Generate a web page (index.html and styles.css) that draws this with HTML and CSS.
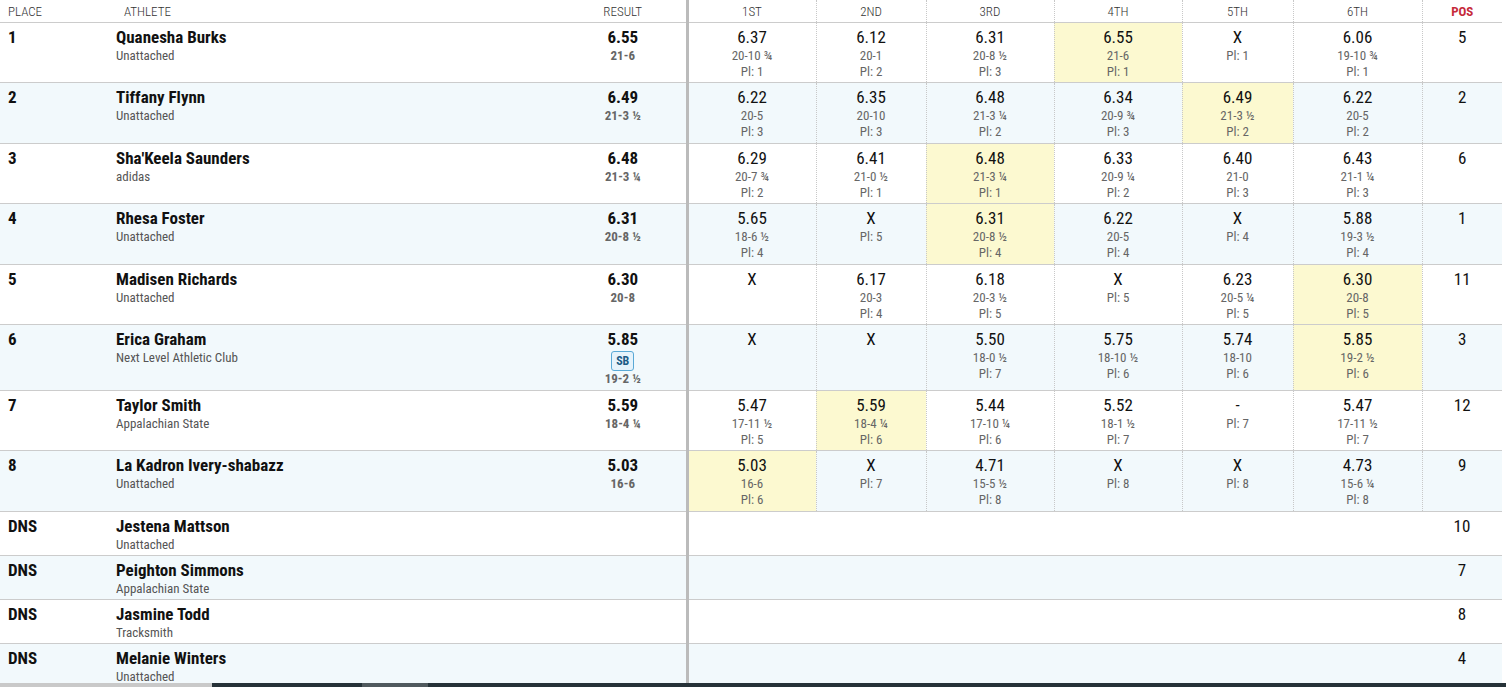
FILE: index.html
```html
<!DOCTYPE html>
<html lang="en">
<head>
  <meta charset="UTF-8">
  <meta name="viewport" content="width=device-width, initial-scale=1.0">
  <title>Long Jump Results</title>
  <link rel="stylesheet" href="styles.css">
</head>
<body>

<div class="page">
  <div class="scroll">
    <table class="results">
      <colgroup>
        <col class="c-place">
        <col class="c-athlete">
        <col class="c-result">
        <col class="c-a1">
        <col class="c-a2">
        <col class="c-a3">
        <col class="c-a4">
        <col class="c-a5">
        <col class="c-a6">
        <col class="c-pos">
      </colgroup>
      <thead>
        <tr>
          <th class="left">Place</th>
          <th class="left">Athlete</th>
          <th class="sep">Result</th>
          <th class="att">1st</th>
          <th class="att">2nd</th>
          <th class="att">3rd</th>
          <th class="att">4th</th>
          <th class="att">5th</th>
          <th class="att">6th</th>
          <th class="pos-head">Pos</th>
        </tr>
      </thead>
      <tbody id="rows"></tbody>
    </table>
  </div>
  <!-- horizontal scrollbar strip -->
  <div class="hbar">
    <div class="hbar-light"></div>
    <div class="hbar-dark"></div>
    <div class="hbar-thumb"></div>
    <div class="hbar-dark wide"></div>
  </div>
</div>

<script>
  const athletes = [
    { place: '1', name: 'Quanesha Burks', team: 'Unattached', mark: '6.55', imp: '21-6', pos: 5,
      att: [['6.37', '20-10 ¾', 1], ['6.12', '20-1', 2], ['6.31', '20-8 ½', 3], ['6.55', '21-6', 1, true], ['X', '', 1], ['6.06', '19-10 ¾', 1]] },
    { place: '2', name: 'Tiffany Flynn', team: 'Unattached', mark: '6.49', imp: '21-3 ½', pos: 2,
      att: [['6.22', '20-5', 3], ['6.35', '20-10', 3], ['6.48', '21-3 ¼', 2], ['6.34', '20-9 ¾', 3], ['6.49', '21-3 ½', 2, true], ['6.22', '20-5', 2]] },
    { place: '3', name: "Sha'Keela Saunders", team: 'adidas', mark: '6.48', imp: '21-3 ¼', pos: 6,
      att: [['6.29', '20-7 ¾', 2], ['6.41', '21-0 ½', 1], ['6.48', '21-3 ¼', 1, true], ['6.33', '20-9 ¼', 2], ['6.40', '21-0', 3], ['6.43', '21-1 ¼', 3]] },
    { place: '4', name: 'Rhesa Foster', team: 'Unattached', mark: '6.31', imp: '20-8 ½', pos: 1,
      att: [['5.65', '18-6 ½', 4], ['X', '', 5], ['6.31', '20-8 ½', 4, true], ['6.22', '20-5', 4], ['X', '', 4], ['5.88', '19-3 ½', 4]] },
    { place: '5', name: 'Madisen Richards', team: 'Unattached', mark: '6.30', imp: '20-8', pos: 11,
      att: [['X', '', null], ['6.17', '20-3', 4], ['6.18', '20-3 ½', 5], ['X', '', 5], ['6.23', '20-5 ¼', 5], ['6.30', '20-8', 5, true]] },
    { place: '6', name: 'Erica Graham', team: 'Next Level Athletic Club', mark: '5.85', imp: '19-2 ½', pos: 3, sb: true,
      att: [['X', '', null], ['X', '', null], ['5.50', '18-0 ½', 7], ['5.75', '18-10 ½', 6], ['5.74', '18-10', 6], ['5.85', '19-2 ½', 6, true]] },
    { place: '7', name: 'Taylor Smith', team: 'Appalachian State', mark: '5.59', imp: '18-4 ¼', pos: 12,
      att: [['5.47', '17-11 ½', 5], ['5.59', '18-4 ¼', 6, true], ['5.44', '17-10 ¼', 6], ['5.52', '18-1 ½', 7], ['-', '', 7], ['5.47', '17-11 ½', 7]] },
    { place: '8', name: 'La Kadron Ivery-shabazz', team: 'Unattached', mark: '5.03', imp: '16-6', pos: 9,
      att: [['5.03', '16-6', 6, true], ['X', '', 7], ['4.71', '15-5 ½', 8], ['X', '', 8], ['X', '', 8], ['4.73', '15-6 ¼', 8]] },
    { place: 'DNS', name: 'Jestena Mattson', team: 'Unattached', pos: 10 },
    { place: 'DNS', name: 'Peighton Simmons', team: 'Appalachian State', pos: 7 },
    { place: 'DNS', name: 'Jasmine Todd', team: 'Tracksmith', pos: 8 },
    { place: 'DNS', name: 'Melanie Winters', team: 'Unattached', pos: 4 }
  ];

  function attemptCell(a) {
    let html = `<div class="mark">${a[0]}</div>`;
    if (a[1]) html += `<div class="sub">${a[1]}</div>`;
    if (a[2] !== null) html += `<div class="sub">Pl: ${a[2]}</div>`;
    return `<td class="att${a[3] ? ' best' : ''}">${html}</td>`;
  }

  function renderRows() {
    const body = document.getElementById('rows');
    athletes.forEach((p, index) => {
      const tr = document.createElement('tr');
      if (index % 2 === 1) tr.className = 'alt';
      if (!p.att) tr.className += ' dns';
      let html = `<td class="place">${p.place}</td>
        <td class="athlete"><div class="name">${p.name}</div><div class="team">${p.team}</div></td>`;
      if (p.att) {
        html += `<td class="result sep"><div class="mark-b">${p.mark}</div>`;
        if (p.sb) html += `<span class="badge">SB</span>`;
        html += `<div class="imp">${p.imp}</div></td>`;
        html += p.att.map(attemptCell).join('');
      } else {
        html += `<td class="result sep"></td><td colspan="6"></td>`;
      }
      html += `<td class="pos">${p.pos}</td>`;
      tr.innerHTML = html;
      body.appendChild(tr);
    });
  }

  renderRows();
</script>

</body>
</html>
```

FILE: styles.css
```css
body {
  margin: 0;
  font-family: "Roboto Condensed", "Liberation Sans Narrow", Roboto, sans-serif;
  color: #111;
  background: #fff;
}
.page {
  height: 687px;
  display: flex;
  flex-direction: column;
  overflow: hidden;
}
.scroll {
  flex: 1;
  overflow: hidden;
}
.results {
  border-collapse: collapse;
  table-layout: fixed;
  width: 1502px;
}
.c-place { width: 116px; }
.c-athlete { width: 444px; }
.c-result { width: 127px; }
.c-a1 { width: 129px; }
.c-a2 { width: 110px; }
.c-a3 { width: 128px; }
.c-a4 { width: 128px; }
.c-a5 { width: 111px; }
.c-a6 { width: 129px; }
.c-pos { width: 80px; }

th {
  height: 22px;
  padding: 0;
  font-size: 13px;
  font-weight: 300;
  color: #333;
  text-transform: uppercase;
  text-align: center;
  border-bottom: 1px solid #ccc;
}
th.left {
  text-align: left;
  padding-left: 8px;
}
th.pos-head {
  color: #c62a3a;
  font-weight: 700;
}
td {
  vertical-align: top;
  padding: 4px 0 2.45px;
  border-bottom: 1px solid #ccc;
}
tr.dns td {
  padding-bottom: 2.3px;
}
tr.alt td {
  background: #f2f9fc;
}
.sep {
  border-right: 3px solid #bbb;
}
.att {
  border-right: 1px dotted #c8c8c8;
  text-align: center;
}
td.best, tr.alt td.best {
  background: #fcf9d0;
}
.place {
  padding-left: 8px;
  font-weight: 700;
  font-size: 17px;
  line-height: 20px;
}
.name {
  font-weight: 700;
  font-size: 17px;
  line-height: 21px;
}
.team {
  font-size: 13px;
  line-height: 16px;
  color: #555;
}
.result {
  text-align: center;
}
.mark-b {
  font-weight: 700;
  font-size: 17px;
  line-height: 21px;
}
.imp {
  font-weight: 700;
  font-size: 13px;
  line-height: 16px;
  color: #666;
}
.badge {
  display: inline-block;
  margin: 1px 0 0;
  padding: 0 4px;
  font-size: 12px;
  font-weight: 700;
  line-height: 18px;
  color: #1d5c86;
  background: #e6f3fb;
  border: 1px solid #5aa9d6;
  border-radius: 3px;
}
.mark {
  font-size: 17px;
  line-height: 21px;
}
.sub {
  font-size: 13px;
  line-height: 16px;
  color: #666;
}
.pos {
  text-align: center;
  font-size: 17px;
  line-height: 20px;
}
.hbar {
  height: 4px;
  display: flex;
}
.hbar-light {
  width: 212px;
  background: #c9c9c9;
}
.hbar-dark {
  width: 150px;
  background: #263238;
}
.hbar-thumb {
  width: 66px;
  background: #505a5e;
}
.hbar-dark.wide {
  flex: 1;
}
```
